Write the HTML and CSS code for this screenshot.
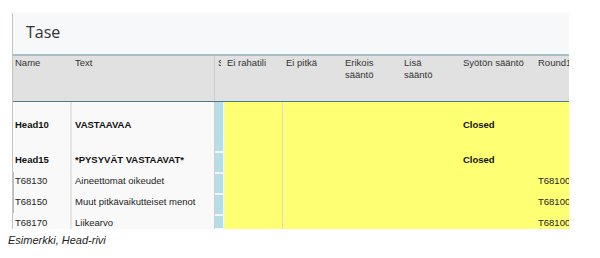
FILE: index.html
```html
<!DOCTYPE html>
<html lang="fi">
<head>
    <meta charset="UTF-8">
    <title>Tase</title>
    <link rel="stylesheet" href="styles.css">
</head>
<body>
    <div class="panel">
        <div class="panel-title">Tase</div>

        <div class="grid-row grid-head">
            <div class="cell cell-name">Name</div>
            <div class="cell cell-text">Text</div>
            <div class="cell cell-s"><span class="clip">S</span></div>
            <div class="cell">Ei rahatili</div>
            <div class="cell">Ei pitkä</div>
            <div class="cell">Erikois<br>sääntö</div>
            <div class="cell">Lisä<br>sääntö</div>
            <div class="cell">Syötön sääntö</div>
            <div class="cell">Round1</div>
        </div>

        <div class="grid-row row-head row-tall">
            <div class="cell cell-name">Head10</div>
            <div class="cell cell-text">VASTAAVAA</div>
            <div class="cell cell-s"></div>
            <div class="cell cell-y cell-split"></div>
            <div class="cell cell-y"></div>
            <div class="cell cell-y"></div>
            <div class="cell cell-y"></div>
            <div class="cell cell-y">Closed</div>
            <div class="cell cell-y"></div>
        </div>

        <div class="grid-row row-head">
            <div class="cell cell-name">Head15</div>
            <div class="cell cell-text">*PYSYVÄT VASTAAVAT*</div>
            <div class="cell cell-s"></div>
            <div class="cell cell-y cell-split"></div>
            <div class="cell cell-y"></div>
            <div class="cell cell-y"></div>
            <div class="cell cell-y"></div>
            <div class="cell cell-y">Closed</div>
            <div class="cell cell-y"></div>
        </div>

        <div class="grid-row">
            <div class="cell cell-name">T68130</div>
            <div class="cell cell-text">Aineettomat oikeudet</div>
            <div class="cell cell-s"></div>
            <div class="cell cell-y cell-split"></div>
            <div class="cell cell-y"></div>
            <div class="cell cell-y"></div>
            <div class="cell cell-y"></div>
            <div class="cell cell-y"></div>
            <div class="cell cell-y">T68100</div>
        </div>

        <div class="grid-row">
            <div class="cell cell-name">T68150</div>
            <div class="cell cell-text">Muut pitkävaikutteiset menot</div>
            <div class="cell cell-s"></div>
            <div class="cell cell-y cell-split"></div>
            <div class="cell cell-y"></div>
            <div class="cell cell-y"></div>
            <div class="cell cell-y"></div>
            <div class="cell cell-y"></div>
            <div class="cell cell-y">T68100</div>
        </div>

        <div class="grid-row row-last">
            <div class="cell cell-name">T68170</div>
            <div class="cell cell-text">Liikearvo</div>
            <div class="cell cell-s"></div>
            <div class="cell cell-y cell-split"></div>
            <div class="cell cell-y"></div>
            <div class="cell cell-y"></div>
            <div class="cell cell-y"></div>
            <div class="cell cell-y"></div>
            <div class="cell cell-y">T68100</div>
        </div>

        <div class="scroll-thumb"></div>
    </div>

    <p class="caption">Esimerkki, Head-rivi</p>
</body>
</html>
```

FILE: styles.css
```css
* {
    margin: 0;
    padding: 0;
    box-sizing: border-box;
}

body {
    font-family: 'Liberation Sans', Arial, sans-serif;
    background: #ffffff;
    color: #222222;
}

.panel {
    position: relative;
    margin: 13px 0 0 12px;
    width: 557px;
    height: 216px;
    border-left: 1px solid #c4c4c4;
    background: #f9f9f9;
    overflow: hidden;
}

.panel-title {
    height: 43px;
    padding: 8px 0 0 13px;
    background: #f7f8fa;
    border-bottom: 2px solid #a9c0c6;
    font-family: 'Open Sans', sans-serif;
    font-size: 16px;
    line-height: 22px;
    color: #333333;
}

.grid-row {
    display: grid;
    grid-template-columns: 59px 143px 9px 59px 59px 59px 59px 75px 60px;
    height: 21px;
    font-size: 9.5px;
    line-height: 14px;
}

.cell {
    padding-left: 3px;
    white-space: nowrap;
    overflow: hidden;
}

.cell-name {
    padding-left: 2px;
    border-right: 2px solid #e6e6e6;
}

.cell-text {
    border-right: 1px solid #cfcfcf;
}

.cell-s {
    background: #b4dfe6;
    border-right: 1px solid #eef6f7;
    border-bottom: 2px solid #f4f4f4;
}

.cell-y {
    background: #ffff73;
}

.cell-split {
    border-right: 1px solid #dcdcd0;
}

/* header */
.grid-head {
    height: 46px;
    background: #e1e1e1;
    border-bottom: 1px solid #4a7c88;
    color: #333333;
    line-height: 12px;
}

.grid-head .cell {
    padding-top: 1px;
    border: none;
}

.grid-head .cell-text {
    border-right: 1px solid #cdcdcd;
}

.grid-head .cell-s {
    background: transparent;
}

.clip {
    display: block;
    width: 3px;
    overflow: hidden;
}

/* body rows */
.row-head {
    font-weight: bold;
    color: #111111;
}

.row-tall {
    height: 51px;
}

.row-tall .cell {
    padding-top: 16px;
}

.row-last {
    height: 14px;
}

.scroll-thumb {
    position: absolute;
    left: -1px;
    top: 159px;
    width: 2px;
    height: 41px;
    background: #bdbdbd;
}

.caption {
    margin: 5px 0 0 8px;
    font-size: 11px;
    line-height: 13px;
    font-style: italic;
    color: #222222;
}
```
